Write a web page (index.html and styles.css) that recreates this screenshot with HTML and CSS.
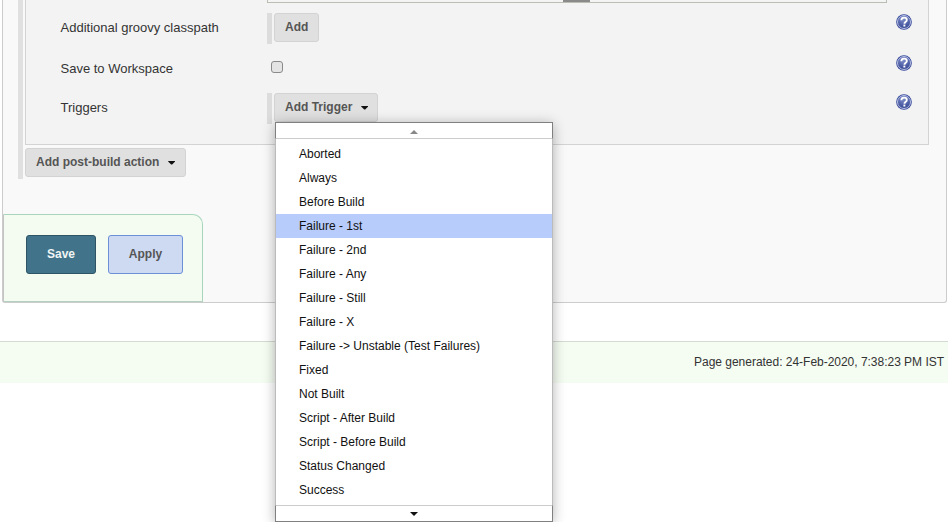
FILE: index.html
```html
<!DOCTYPE html>
<html lang="en">
<head>
  <meta charset="UTF-8" />
  <title>Job Config</title>
  <link rel="stylesheet" href="styles.css">
</head>
<body>
  <div class="page">
    <div class="panel">
      <div class="post-build">
        <div class="section">
          <div class="row row-top">
            <div></div>
            <div class="text-stub"><span class="grip"></span></div>
            <div></div>
          </div>
          <div class="row row-classpath">
            <div class="label">Additional groovy classpath</div>
            <div class="setting"><span class="bar"></span><button class="btn">Add</button></div>
            <svg class="help" viewBox="0 0 16 16"><use href="#help-icon"/></svg>
          </div>
          <div class="row row-save">
            <div class="label">Save to Workspace</div>
            <div class="setting"><input type="checkbox" class="check"></div>
            <svg class="help" viewBox="0 0 16 16"><use href="#help-icon"/></svg>
          </div>
          <div class="row row-triggers">
            <div class="label">Triggers</div>
            <div class="setting"><span class="bar"></span><button class="btn btn-drop">Add Trigger <span class="caret"></span></button></div>
            <svg class="help" viewBox="0 0 16 16"><use href="#help-icon"/></svg>
          </div>
        </div>
        <button class="btn btn-drop btn-post">Add post-build action <span class="caret"></span></button>
      </div>
      <div class="bottom-bar">
        <button class="btn-save">Save</button>
        <button class="btn-apply">Apply</button>
      </div>
    </div>
    <div class="footer">Page generated: 24-Feb-2020, 7:38:23 PM IST</div>
  </div>

  <!-- dropdown from Add Trigger -->
  <div class="menu">
    <div class="scroll scroll-up"><span class="arrow-up"></span></div>
    <ul class="menu-list">
      <li>Aborted</li>
      <li>Always</li>
      <li>Before Build</li>
      <li class="active">Failure - 1st</li>
      <li>Failure - 2nd</li>
      <li>Failure - Any</li>
      <li>Failure - Still</li>
      <li>Failure - X</li>
      <li>Failure -&gt; Unstable (Test Failures)</li>
      <li>Fixed</li>
      <li>Not Built</li>
      <li>Script - After Build</li>
      <li>Script - Before Build</li>
      <li>Status Changed</li>
      <li>Success</li>
    </ul>
    <div class="scroll scroll-down"><span class="arrow-down"></span></div>
  </div>

  <svg width="0" height="0" class="defs">
    <defs>
      <radialGradient id="help-fill" cx="0.45" cy="0.25" r="0.85">
        <stop offset="0" stop-color="#7f8fca"/>
        <stop offset="1" stop-color="#2c3c8c"/>
      </radialGradient>
      <symbol id="help-icon" viewBox="0 0 16 16">
        <circle cx="8" cy="8" r="7.8" fill="#34479a"/>
        <circle cx="8" cy="8" r="6.5" fill="url(#help-fill)" stroke="#d5dcf2" stroke-width="0.8"/>
        <path d="M5.3 6.2C5.4 4.5 6.6 3.6 8.1 3.6c1.6 0 2.7 1 2.7 2.3 0 1.1-.7 1.7-1.4 2.2-.6.4-.9.8-.9 1.6" fill="none" stroke="#fff" stroke-width="1.9"/>
        <rect x="7.4" y="10.6" width="1.9" height="1.9" fill="#fff"/>
      </symbol>
    </defs>
  </svg>
</body>
</html>
```
FILE: styles.css
```css
html, body {
  margin: 0;
  padding: 0;
  background: #fff;
}
body {
  font-family: "Liberation Sans", Arial, sans-serif;
  font-size: 12px;
  color: #333;
  height: 522px;
  overflow: hidden;
  position: relative;
}
.page {
  display: flow-root;
}
.panel {
  margin-left: 2px;
  width: 943px;
  height: 302px;
  background: #f9f9f9;
  border: 1px solid #ccc;
  border-top: none;
  border-radius: 0 0 3px 3px;
  display: flex;
  flex-direction: column;
}
.post-build {
  margin-left: 15px;
  width: 908px;
  height: 179px;
  border-left: 5px solid #e0e0e0;
  padding-left: 2px;
}
.section {
  width: 904px;
  height: 145px;
  box-sizing: border-box;
  background: #f3f3f3;
  border: 1px solid #d3d3d3;
  border-top: none;
}
.row {
  display: grid;
  grid-template-columns: 206.5px 1fr 16px;
  padding-left: 34.5px;
  padding-right: 16px;
}
.row-top {
  height: 13px;
}
.text-stub {
  height: 3px;
  box-sizing: border-box;
  border: 1px solid #b9bdb3;
  border-top: none;
  background: #f4f4f4;
  margin-right: 9px;
}
.grip {
  display: block;
  width: 27px;
  height: 2px;
  margin-left: 295px;
  background: #8a8a8a;
}
.label {
  font-size: 13px;
  line-height: 15px;
  color: #333;
  padding-top: 7px;
}
.row-classpath {
  height: 41px;
}
.row-save {
  height: 39px;
}
.row-triggers {
  height: 31px;
}
.setting {
  display: flex;
  align-items: flex-start;
}
.bar {
  width: 5px;
  height: 31px;
  background: #dcdcdc;
  margin-right: 2px;
}
.btn {
  font-family: "Liberation Sans", Arial, sans-serif;
  font-size: 12px;
  font-weight: bold;
  color: #555;
  height: 29px;
  padding: 0 10px 2px;
  background: #e0e0e0;
  border: 1px solid #d3d3d3;
  border-radius: 3px;
}
.btn-drop {
  padding-right: 9px;
}
.caret {
  display: inline-block;
  width: 7px;
  height: 4px;
  margin-left: 5.5px;
  vertical-align: 1px;
  background: #111;
  clip-path: polygon(0 0, 100% 0, 100% 25%, 57% 100%, 43% 100%, 0 25%);
}
.btn-post {
  display: block;
  margin-top: 3px;
  padding-right: 10px;
}
.check {
  width: 12px;
  height: 12px;
  margin: 7px 0 0 4px;
  appearance: none;
  background: #e4e4e4;
  border: 1px solid #8a8a8a;
  border-radius: 3px;
}
.help {
  width: 16px;
  height: 16px;
  margin-top: 1px;
}
.bottom-bar {
  width: 200px;
  height: 88px;
  margin-top: 35px;
  box-sizing: border-box;
  background: #f4fbf0;
  border: 1px solid #a8d6bd;
  border-left-color: #c4c4c4;
  border-radius: 0 10px 0 0;
  border-bottom-color: #b5cfc0;
  padding: 20px 0 0 22px;
  display: flex;
  align-items: flex-start;
  gap: 12px;
}
.btn-save, .btn-apply {
  font-family: "Liberation Sans", Arial, sans-serif;
  font-size: 12px;
  font-weight: bold;
  height: 39px;
  border-radius: 3px;
  padding: 0 0 2px;
}
.btn-save {
  width: 70px;
  color: #f0f4f4;
  background: #41748a;
  border: 1px solid #2e5566;
}
.btn-apply {
  width: 75px;
  color: #555;
  background: #cddaf1;
  border: 1px solid #6c90d8;
}
.footer {
  margin-top: 38px;
  height: 41px;
  background: #f5fcf2;
  border-top: 1px solid #d3dcd0;
  text-align: right;
  padding-right: 4px;
  font-size: 12px;
  line-height: 41px;
  letter-spacing: -0.02px;
  color: #333;
}
.menu {
  position: absolute;
  left: 275px;
  top: 122px;
  width: 278px;
  box-sizing: border-box;
  background: #fff;
  box-shadow: 0 2px 12px rgba(0, 0, 0, 0.3);
}
.scroll {
  box-sizing: border-box;
  background: #fff;
  border: 1px solid #808080;
  text-align: center;
}
.scroll-up {
  height: 17px;
  border-bottom: 1px solid #ccc;
  line-height: 14px;
}
.scroll-down {
  height: 17px;
  border-top: 1px solid #ccc;
  line-height: 12px;
}
.arrow-up, .arrow-down {
  display: inline-block;
  width: 8px;
  height: 4px;
}
.arrow-up {
  background: #888;
  clip-path: polygon(50% 0, 100% 100%, 0 100%);
}
.arrow-down {
  background: #111;
  clip-path: polygon(0 0, 100% 0, 50% 100%);
}
.menu-list {
  list-style: none;
  margin: 0;
  padding: 3px 0;
  border-left: 1px solid #bbb;
  border-right: 1px solid #bbb;
}
.menu-list li {
  height: 24px;
  line-height: 24px;
  padding-left: 23px;
  font-size: 12px;
  color: #111;
}
.menu-list li.active {
  background: #b8ccfb;
}
.defs {
  position: absolute;
}
```
